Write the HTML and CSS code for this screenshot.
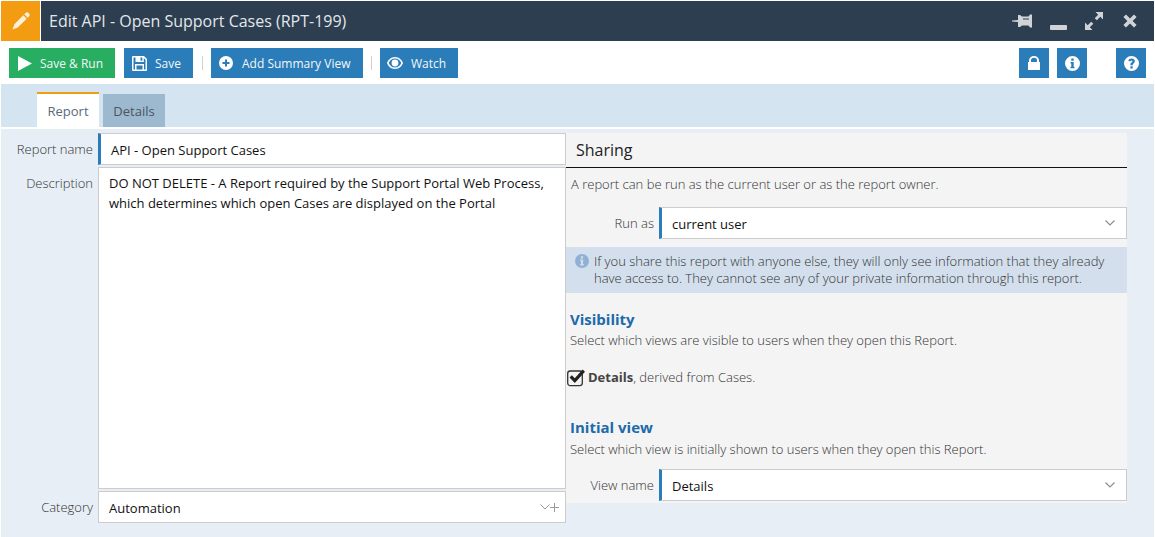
FILE: index.html
```html
<!DOCTYPE html>
<html lang="en">
<head>
<meta charset="utf-8">
<title>Edit API - Open Support Cases (RPT-199)</title>
<link rel="stylesheet" href="styles.css">
</head>
<body>
<div class="app">
  <header class="titlebar">
    <div class="title-icon">
      <svg width="18" height="18" viewBox="0 0 18 18"><path fill="#fdf0d9" d="M12.300 2.300 13.800.8A1.800 1.800 0 0 1 16.300.8L17.200 1.700A1.800 1.800 0 0 1 17.200 4.200L15.700 5.700ZM11.300 3.300 14.700 6.700 5.800 15.600 .5 17.500 2.400 12.200Z"/></svg>
    </div>
    <h1 class="title-text">Edit API - Open Support Cases (RPT-199)</h1>
    <div class="window-controls">
      <svg class="wc-pin" width="20" height="14" viewBox="0 0 20 14"><path fill="#d0d4d8" fill-rule="evenodd" d="M0 6.500 6 6V1H8L10 2.500H16.500L18 .5H20V13.500H18L16.500 11.500H10L8 13H6V8L0 7.500ZM11 4.500V5.500H17V4.500Z"/></svg>
      <svg class="wc-min" width="17" height="5" viewBox="0 0 17 5"><rect width="17" height="5" rx="1" fill="#d0d4d8"/></svg>
      <svg class="wc-max" width="18" height="18" viewBox="0 0 18 18"><path fill="#d0d4d8" d="M10.500 0H18V7.500L15.300 4.800 11.800 8.300 9.700 6.200 13.200 2.700ZM7.500 18H0V10.500L2.700 13.200 6.200 9.700 8.300 11.800 4.800 15.300Z"/></svg>
      <svg class="wc-close" width="14" height="14" viewBox="0 0 14 14"><path fill="#d0d4d8" d="M3 .4 7 4.400 11 .4 13.600 3 9.600 7 13.600 11 11 13.600 7 9.600 3 13.600.4 11 4.400 7 .4 3Z"/></svg>
    </div>
  </header>

  <nav class="toolbar">
    <button class="btn btn-green btn-run">
      <svg width="14" height="15" viewBox="0 0 14 15"><path fill="#fff" d="M0 0 14 7.500 0 15Z"/></svg>
      <span>Save &amp; Run</span>
    </button>
    <button class="btn btn-save">
      <svg width="15" height="15" viewBox="0 0 15 15"><path fill="#fff" fill-rule="evenodd" d="M1 0H12L15 3V14A1 1 0 0 1 14 15H1A1 1 0 0 1 0 14V1A1 1 0 0 1 1 0ZM1.500 1.500V13.500H3V8H12V13.500H13.500V3.700L11.800 2V6H3.500V1.500ZM4.500 9.500V13.500H10.500V9.500ZM8.500 1.500V4.800H10.300V1.500Z"/></svg>
      <span>Save</span>
    </button>
    <span class="sep"></span>
    <button class="btn btn-add">
      <svg width="14" height="14" viewBox="0 0 14 14"><path fill="#fff" fill-rule="evenodd" d="M7 0A7 7 0 1 1 7 14 7 7 0 1 1 7 0ZM6 3.500V6H3.500V8H6V10.500H8V8H10.500V6H8V3.500Z"/></svg>
      <span>Add Summary View</span>
    </button>
    <span class="sep"></span>
    <button class="btn btn-watch">
      <svg width="16" height="12" viewBox="0 0 16 12"><path fill="#fff" fill-rule="evenodd" d="M8 0C12 0 15 3 16 6 15 9 12 12 8 12S1 9 0 6C1 3 4 0 8 0ZM8 1.400C5 1.400 2.800 3.400 1.700 6 2.800 8.600 5 10.600 8 10.600S13.200 8.600 14.300 6C13.200 3.400 11 1.400 8 1.400ZM8 2.600A3.400 3.400 0 1 1 8 9.400 3.400 3.400 0 1 1 8 2.600Z"/></svg>
      <span>Watch</span>
    </button>
    <div class="toolbar-right">
      <button class="btn btn-square" aria-label="Lock">
        <svg width="12" height="14" viewBox="0 0 12 14"><path fill="#fff" fill-rule="evenodd" d="M1 6V4.500A5 4.500 0 0 1 11 4.500V6H12V14H0V6ZM3 6H9V4.500A3 2.800 0 0 0 3 4.500Z"/></svg>
      </button>
      <button class="btn btn-square" aria-label="Information">
        <svg width="15" height="15" viewBox="0 0 15 15"><path fill="#fff" fill-rule="evenodd" d="M7.500 0A7.500 7.500 0 1 1 7.500 15 7.500 7.500 0 1 1 7.500 0ZM6.300 2.500V4.800H8.700V2.500ZM5.500 6V7.500H6.300V10.800H5.500V12.300H9.500V10.800H8.700V6Z"/></svg>
      </button>
      <button class="btn btn-square btn-help" aria-label="Help">
        <svg width="15" height="15" viewBox="0 0 15 15"><path fill="#fff" fill-rule="evenodd" d="M7.500 0A7.500 7.500 0 1 1 7.500 15 7.500 7.500 0 1 1 7.500 0ZM6.400 10.300V12.500H8.700V10.300ZM7.600 2.500C5.800 2.500 4.700 3.400 4.300 4.800L6.200 5.500C6.400 4.800 6.800 4.400 7.500 4.400 8.100 4.400 8.500 4.700 8.500 5.200 8.500 6.200 6.400 6.500 6.400 8.500V9.300H8.700V8.800C8.700 7.700 10.900 7.200 10.900 5.100 10.900 3.500 9.400 2.500 7.600 2.500Z"/></svg>
      </button>
    </div>
  </nav>

  <div class="tabs">
    <div class="tab tab-active">Report</div>
    <div class="tab">Details</div>
  </div>

  <main class="content">
    <section class="form-left">
      <label class="label label-name">Report name</label>
      <div class="input input-accent">API - Open Support Cases</div>
      <label class="label label-desc">Description</label>
      <div class="textarea">DO NOT DELETE - A Report required by the Support Portal Web Process, which determines which open Cases are displayed on the Portal</div>
      <label class="label label-cat">Category</label>
      <div class="input input-cat">
        <span>Automation</span>
        <span class="cat-icons">
          <svg width="10" height="6" viewBox="0 0 10 6"><path fill="none" stroke="#9a9a9a" d="M.5.500 5 5 9.500.500"/></svg>
          <svg width="9" height="9" viewBox="0 0 9 9"><path fill="none" stroke="#9a9a9a" d="M4.500 0V9M0 4.500H9"/></svg>
        </span>
      </div>
    </section>

    <section class="panel">
      <h2 class="panel-head">Sharing</h2>
      <p class="panel-intro">A report can be run as the current user or as the report owner.</p>
      <div class="field-row run-row">
        <label class="field-label">Run as</label>
        <div class="select">
          <span>current user</span>
          <svg width="10" height="6" viewBox="0 0 10 6"><path fill="none" stroke="#8a8a8a" stroke-width="1.100" d="M.5.500 5 5 9.500.500"/></svg>
        </div>
      </div>
      <div class="notice">
        <svg class="notice-icon" width="14" height="14" viewBox="0 0 14 14"><path fill="#8fb1d3" fill-rule="evenodd" d="M7 0A7 7 0 1 1 7 14 7 7 0 1 1 7 0ZM5.900 2.300V4.400H8.100V2.300ZM5.200 5.600V7H5.900V10H5.200V11.400H8.800V10H8.100V5.600Z"/></svg>
        <p>If you share this report with anyone else, they will only see information that they already have access to. They cannot see any of your private information through this report.</p>
      </div>
      <h3 class="sub-head vis-head">Visibility</h3>
      <p class="sub-text">Select which views are visible to users when they open this Report.</p>
      <div class="check-row">
        <svg width="19" height="19" viewBox="0 0 19 19"><rect x="0.700" y="3" width="14.600" height="14.600" rx="2.500" fill="none" stroke="#333" stroke-width="1.300"/><path fill="none" stroke="#222" stroke-width="3.200" d="M3.700 8.300 7.800 12.600 16.800 2.600"/></svg>
        <span><b>Details</b>, derived from Cases.</span>
      </div>
      <h3 class="sub-head init-head">Initial view</h3>
      <p class="sub-text init-text">Select which view is initially shown to users when they open this Report.</p>
      <div class="field-row view-row">
        <label class="field-label">View name</label>
        <div class="select">
          <span>Details</span>
          <svg width="10" height="6" viewBox="0 0 10 6"><path fill="none" stroke="#8a8a8a" stroke-width="1.100" d="M.5.500 5 5 9.500.500"/></svg>
        </div>
      </div>
    </section>
  </main>
</div>
</body>
</html>
```
FILE: styles.css
```css
* { box-sizing: border-box; }
html, body { height: 100%; }
body {
  margin: 0;
  background: #fff;
  font-family: "Open Sans", "Liberation Sans", sans-serif;
  font-size: 13px;
  color: #444;
  overflow: hidden;
}
.app {
  height: 537px;
  padding: 1px 1px 0 1px;
  display: flex;
  flex-direction: column;
}
.titlebar {
  height: 40px;
  flex: none;
  display: flex;
  align-items: center;
  background: #2d3e50;
}
.title-icon {
  width: 39px;
  height: 40px;
  margin-right: 1px;
  background: #f39c12;
  display: flex;
  align-items: center;
  justify-content: center;
  box-shadow: 1px 0 0 #fff;
}
.title-text {
  margin: 0 0 0 8px;
  font-size: 16px;
  font-weight: 400;
  color: #e3e7ea;
}
.window-controls {
  margin-left: auto;
  display: flex;
  align-items: center;
  padding-right: 17px;
}
.wc-pin { margin-right: 18px; margin-top: 0; }
.wc-min { margin-right: 18px; margin-top: 12px; }
.wc-max { margin-right: 20px; margin-top: 0; }
.wc-close { margin-top: 0; }

.toolbar {
  height: 43px;
  flex: none;
  display: flex;
  align-items: flex-start;
  padding: 7px 8px 0 8px;
  background: #fff;
}
.btn {
  height: 30px;
  border: 0;
  padding: 0;
  background: #2a7db8;
  color: #f2f7fb;
  font: 400 12px "Open Sans", "Liberation Sans", sans-serif;
  display: flex;
  align-items: center;
}
.btn-green { background: #27ae60; }
.btn-run { width: 106px; padding-left: 9px; gap: 8px; margin-right: 9px; }
.btn-save { width: 69px; padding-left: 8px; gap: 8px; }
.btn-add { width: 152px; padding-left: 8px; gap: 9px; }
.btn-watch { width: 78px; padding-left: 7px; gap: 8px; }
.sep {
  width: 1px;
  height: 14px;
  margin: 8px 8px 0 9px;
  background: #d0d0d0;
}
.btn-add + .sep { margin: 8px 8px 0 8px; }
.toolbar-right {
  margin-left: auto;
  display: flex;
}
.btn-square { width: 30px; justify-content: center; margin-right: 8px; }
.btn-help { margin-left: 21px; margin-right: 0; }

.tabs {
  height: 43px;
  flex: none;
  display: flex;
  align-items: flex-end;
  gap: 4px;
  padding-left: 36px;
  background: #d4e5f1;
}
.tab {
  width: 62px;
  height: 33px;
  background: #9db9cf;
  color: #4a5560;
  display: flex;
  align-items: center;
  justify-content: center;
  padding-top: 1px;
}
.tab-active {
  height: 35px;
  background: #fff;
  border-top: 2px solid #f39c12;
  color: #5a6a7c;
}

.content {
  flex: 1;
  margin-top: 2px;
  background: #e7eef6;
  display: flex;
  align-items: flex-start;
  padding: 4px 28px 0 0;
}
.form-left {
  width: 565px;
  flex: none;
  display: grid;
  grid-template-columns: 97px 468px;
  grid-template-rows: 32px 322px 32px;
  row-gap: 2px;
}
.label {
  text-align: right;
  padding-right: 5px;
  font-weight: 300;
  color: #333;
}
.label-name { padding-top: 7px; }
.label-desc { padding-top: 7px; }
.label-cat { padding-top: 7px; }
.input {
  background: #fff;
  border: 1px solid #ccc;
  color: #111;
  padding: 7px 10px 0 10px;
}
.input-accent {
  border-left: 3px solid #2a7db8;
  padding-left: 10px;
}
.input-cat {
  display: flex;
  justify-content: space-between;
  padding-right: 6px;
}
.cat-icons {
  display: flex;
  align-items: center;
  height: 14px;
  margin-top: 1px;
}
.textarea {
  background: #fff;
  border: 1px solid #ccc;
  color: #111;
  padding: 5px 10px;
  line-height: 20px;
}

.panel {
  width: 561px;
  height: 370px;
  flex: none;
  background: #f4f4f4;
}
.panel-head {
  margin: 0;
  height: 35px;
  padding: 7px 10px 0 10px;
  font-size: 16px;
  font-weight: 400;
  line-height: 20px;
  color: #222;
  border-bottom: 1px solid #111;
}
.panel-intro {
  margin: 0;
  padding: 7px 0 0 5px;
  line-height: 18px;
  font-weight: 300;
  color: #333;
}
.field-row {
  display: flex;
  align-items: stretch;
}
.run-row { margin-top: 14px; }
.view-row { margin-top: 11px; }
.field-label {
  width: 93px;
  text-align: right;
  padding: 7px 5px 0 0;
  font-weight: 300;
  color: #333;
}
.select {
  flex: 1;
  height: 32px;
  background: #fff;
  border: 1px solid #ccc;
  border-left: 3px solid #2a7db8;
  color: #111;
  padding: 7px 11px 0 10px;
  display: flex;
  justify-content: space-between;
}
.select svg { margin-top: 5px; }
.notice {
  margin-top: 8px;
  height: 46px;
  background: #d3dfed;
  display: flex;
  padding: 6px 10px 0 9px;
  gap: 5px;
}
.notice-icon { flex: none; margin-top: 1px; }
.notice p {
  margin: 0;
  line-height: 17px;
  font-weight: 300;
  color: #333;
}
.sub-head {
  margin: 0;
  font-size: 15px;
  font-weight: 700;
  line-height: 20px;
  color: #1d6aaa;
  padding-left: 4px;
}
.vis-head { margin-top: 16px; }
.init-head { margin-top: 0; }
.sub-text {
  margin: 2px 0 0;
  padding-left: 4px;
  line-height: 18px;
  font-weight: 300;
  color: #333;
}
.init-text { margin-top: 3px; }
.check-row {
  display: flex;
  align-items: center;
  height: 20px;
  margin: 18px 0 30px 1px;
  gap: 2px;
  font-weight: 300;
  color: #333;
}
.check-row b { font-weight: 700; color: #444; }
```
